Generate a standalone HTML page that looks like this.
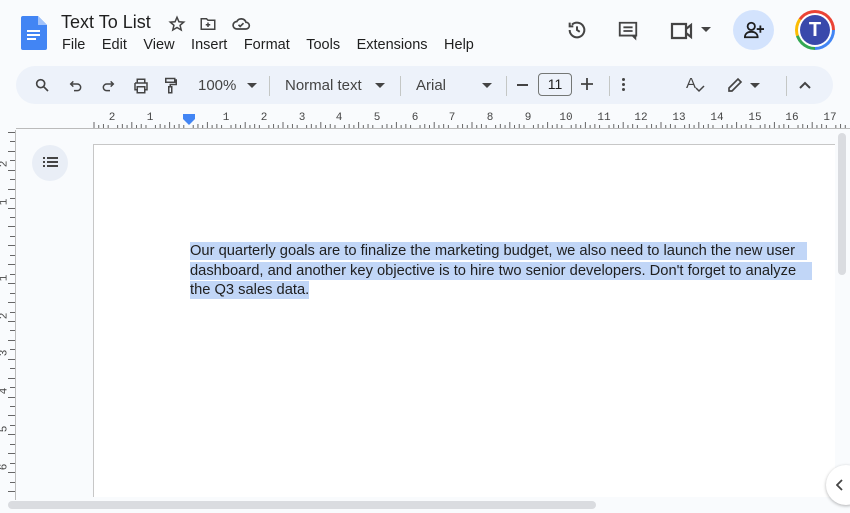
<!DOCTYPE html>
<html><head><meta charset="utf-8"><style>
*{margin:0;padding:0;box-sizing:border-box}
body{width:850px;height:513px;overflow:hidden;background:#f9fbfd;font-family:"Liberation Sans",Arial,sans-serif;position:relative;color:#1f1f1f}
.abs{position:absolute}
.menu span{margin-right:16.5px}
.tb{position:absolute;left:16px;top:66px;width:817px;height:38px;background:#edf2fa;border-radius:19px}
.sep{position:absolute;top:10px;width:1px;height:20px;background:#c4c7c5}
svg{position:absolute}
.rn{position:absolute;top:112px;font-size:11px;color:#444;font-family:"Liberation Mono",monospace}
</style></head><body>
<svg style="left:21px;top:16px" width="26" height="34" viewBox="0 0 26 34"><path d="M2 0h15l9 9v23a2 2 0 0 1-2 2H2a2 2 0 0 1-2-2V2a2 2 0 0 1 2-2z" fill="#4285f4"/><path d="M17 0v9h9z" fill="#a1c2fa"/><rect x="6" y="14" width="13" height="2" fill="#fff"/><rect x="6" y="18" width="13" height="2" fill="#fff"/><rect x="6" y="22" width="9" height="2" fill="#fff"/></svg>
<div class="abs" style="left:61px;top:12px;font-size:18px;color:#1f1f1f">Text To List</div>
<svg style="left:168px;top:15px" width="18" height="18" viewBox="0 0 24 24"><path d="M12 3l2.6 6 6.4.5-4.9 4.2 1.5 6.3L12 16.7 6.4 20l1.5-6.3L3 9.5l6.4-.5z" fill="none" stroke="#444" stroke-width="2"/></svg>
<svg style="left:199px;top:15px" width="18" height="18" viewBox="0 0 24 24"><path d="M3 5h7l2 2h9v12H3z M9 13h6 M12 10v6" fill="none" stroke="#444" stroke-width="2"/></svg>
<svg style="left:230px;top:14px" width="22" height="20" viewBox="0 0 24 24"><path d="M7 18h11a4 4 0 0 0 0-8 6 6 0 0 0-11-1 4.5 4.5 0 0 0 0 9z M9 13l2 2 4-4" fill="none" stroke="#444" stroke-width="2"/></svg>
<div class="abs menu" style="left:62px;top:37px;font-size:14.5px;color:#1f1f1f"><span>File</span><span>Edit</span><span>View</span><span>Insert</span><span>Format</span><span>Tools</span><span>Extensions</span><span>Help</span></div>
<svg style="left:566px;top:19px" width="22" height="22" viewBox="0 0 24 24"><path d="M4 12a8 8 0 1 0 2.5-5.8M4 4v4h4M12 8v4l3 2" fill="none" stroke="#444" stroke-width="2.2"/></svg>
<svg style="left:617px;top:20px" width="22" height="22" viewBox="0 0 24 24"><path d="M3 3h18v14H7l-0 0H3z M7 8h10 M7 12h10 M17 17l3 3V17" fill="none" stroke="#444" stroke-width="2"/></svg>
<svg style="left:670px;top:21px" width="26" height="20" viewBox="0 0 26 20"><path d="M2 3h14v14H2z M16 8l5-4v12l-5-4" fill="none" stroke="#444" stroke-width="2.2"/></svg>
<svg style="left:701px;top:27px" width="10" height="6"><path d="M0 0h10L5 5z" fill="#444"/></svg>
<div class="abs" style="left:733px;top:10px;width:41px;height:40px;border-radius:50%;background:#d3e3fd"></div>
<svg style="left:743px;top:20px" width="22" height="20" viewBox="0 0 24 22"><circle cx="9" cy="7" r="4" fill="none" stroke="#1f1f1f" stroke-width="2"/><path d="M2 19c0-4 3-6 7-6s7 2 7 6z M19 6v8 M15 10h8" fill="none" stroke="#1f1f1f" stroke-width="2"/></svg>
<div class="abs" style="left:795px;top:10px;width:40px;height:40px;border-radius:50%;background:conic-gradient(#ea4335 0 25%,#4285f4 25% 50%,#34a853 50% 70%,#fbbc04 70% 85%,#ea4335 85%)"></div>
<div class="abs" style="left:798px;top:13px;width:34px;height:34px;border-radius:50%;background:#fff"></div>
<div class="abs" style="left:800px;top:15px;width:30px;height:30px;border-radius:50%;background:#3949ab;color:#fff;font-weight:bold;font-size:20px;text-align:center;line-height:30px">T</div>
<div class="tb">
<svg style="left:18px;top:11px" width="16" height="16" viewBox="0 0 24 24"><circle cx="10" cy="10" r="6" fill="none" stroke="#444" stroke-width="2.5"/><path d="M14.5 14.5L21 21" stroke="#444" stroke-width="2.5"/></svg>
<svg style="left:52px;top:12px" width="16" height="16" viewBox="0 0 24 24"><path d="M8 5L4 9l4 4M4 9h10a5 5 0 0 1 0 10H9" fill="none" stroke="#444" stroke-width="2.2"/></svg>
<svg style="left:84px;top:12px" width="16" height="16" viewBox="0 0 24 24"><path d="M16 5l4 4-4 4M20 9H10a5 5 0 0 0 0 10h5" fill="none" stroke="#444" stroke-width="2.2"/></svg>
<svg style="left:116px;top:11px" width="18" height="18" viewBox="0 0 24 24"><path d="M7 8V3h10v5 M4 8h16v9h-3 M7 17H4V8 M7 13h10v8H7z" fill="none" stroke="#444" stroke-width="2"/></svg>
<svg style="left:147px;top:11px" width="16" height="18" viewBox="0 0 20 24"><path d="M3 2h12v5H3z M15 4h2v6H9v3 M7 13h4v8H7z" fill="none" stroke="#444" stroke-width="2"/></svg>
<div class="abs" style="left:182px;top:11px;font-size:15px;color:#444">100%</div>
<svg style="left:231px;top:17px" width="10" height="6"><path d="M0 0h10L5 5z" fill="#444"/></svg>
<div class="sep" style="left:253px"></div>
<div class="abs" style="left:269px;top:11px;font-size:15px;color:#444">Normal text</div>
<svg style="left:359px;top:17px" width="10" height="6"><path d="M0 0h10L5 5z" fill="#444"/></svg>
<div class="sep" style="left:384px"></div>
<div class="abs" style="left:400px;top:11px;font-size:15px;color:#444">Arial</div>
<svg style="left:466px;top:17px" width="10" height="6"><path d="M0 0h10L5 5z" fill="#444"/></svg>
<div class="sep" style="left:490px"></div>
<div class="abs" style="left:501px;top:18px;width:11px;height:1.5px;background:#444"></div>
<div class="abs" style="left:522px;top:7px;width:34px;height:23px;border:1px solid #747775;border-radius:4px;font-size:14px;text-align:center;line-height:21px;color:#1f1f1f">11</div>
<svg style="left:565px;top:12px" width="12" height="12"><path d="M6 0v12M0 6h12" stroke="#444" stroke-width="1.8"/></svg>
<div class="sep" style="left:593px"></div>
<div class="abs" style="left:606px;top:12px;width:3px;height:3px;border-radius:50%;background:#444;box-shadow:0 5px 0 #444,0 10px 0 #444"></div>
<div class="abs" style="left:670px;top:9px;font-size:15px;color:#444">A</div>
<svg style="left:679px;top:19px" width="10" height="8"><path d="M1 3l3 3 5-5" fill="none" stroke="#444" stroke-width="1.5"/></svg>
<svg style="left:710px;top:10px" width="18" height="18" viewBox="0 0 24 24"><path d="M4 20v-4L16 4l4 4L8 20z" fill="none" stroke="#444" stroke-width="2.2"/></svg>
<svg style="left:734px;top:17px" width="10" height="6"><path d="M0 0h10L5 5z" fill="#444"/></svg>
<div class="sep" style="left:770px"></div>
<svg style="left:782px;top:14px" width="14" height="10"><path d="M2 8l5-5 5 5" fill="none" stroke="#444" stroke-width="2"/></svg>
</div>
<svg style="left:0;top:108px" width="850" height="22">
<path d="M16 20.5H850" stroke="#bbb"/>
<g id="tk"></g>
<path d="M183 6h12v5l-6 6-6-6z" fill="#4285f4"/>
</svg>
<div id="rt"></div>
<div class="abs" style="left:15px;top:130px;width:1px;height:370px;background:#bbb"></div>
<div id="lr"></div>
<div class="abs" style="left:32px;top:145px;width:36px;height:36px;border-radius:50%;background:#e9eef6"></div>
<svg style="left:43px;top:157px" width="15" height="12"><path d="M0 1h2M0 5h2M0 9h2M4 1h11M4 5h11M4 9h11" stroke="#444" stroke-width="2"/></svg>
<div class="abs" style="left:93px;top:144px;width:742px;height:353px;background:#fff;border-left:1px solid #c7c7c7;border-top:1px solid #c7c7c7"></div>
<div class="abs" style="left:190px;top:242px;width:630px;font-size:14.7px;line-height:19.5px;color:#1f1f1f;font-family:'Liberation Sans',Arial,sans-serif"><span style="background:#c1d6f7;padding:1px 12px 1px 0">Our quarterly goals are to finalize the marketing budget, we also need to launch the new user</span><br><span style="background:#c1d6f7;padding:1px 16px 1px 0">dashboard, and another key objective is to hire two senior developers. Don't forget to analyze</span><br><span style="background:#c1d6f7;padding:1px 0">the Q3 sales data.</span></div>
<div class="abs" style="left:838px;top:133px;width:8px;height:142px;border-radius:4px;background:#dadce0"></div>
<div class="abs" style="left:8px;top:501px;width:588px;height:8px;border-radius:4px;background:#dadce0"></div>
<div class="abs" style="left:826px;top:465px;width:40px;height:40px;border-radius:50%;background:#fff;box-shadow:0 1px 3px rgba(0,0,0,.3)"></div>
<svg style="left:836px;top:479px" width="8" height="12"><path d="M6 1L1 6l5 5" fill="none" stroke="#444" stroke-width="1.8"/></svg>
<script>
var s='';
var g=document.getElementById('tk');var ns='http://www.w3.org/2000/svg';
var unit=37.8,origin=190;
for(var x=94;x<=850;x+=unit/8){var i=Math.round((x-origin)/(unit/8));var h=(i%8==0)?0:(i%4==0?6:(i%2==0?4:3));if(i%8==0)continue;var l=document.createElementNS(ns,'line');l.setAttribute('x1',x);l.setAttribute('x2',x);l.setAttribute('y1',20-h);l.setAttribute('y2',20);l.setAttribute('stroke','#666');g.appendChild(l);}
var labels=[[112,'2'],[150,'1'],[226,'1'],[264,'2'],[302,'3'],[339,'4'],[377,'5'],[415,'6'],[452,'7'],[490,'8'],[528,'9'],[566,'10'],[604,'11'],[641,'12'],[679,'13'],[717,'14'],[755,'15'],[792,'16'],[830,'17']];
labels.forEach(function(a){s+='<div class="rn" style="left:'+(a[0]-(a[1].length*3.3))+'px">'+a[1]+'</div>'});
document.getElementById('rt').innerHTML=s;
var t='';
for(var y=132;y<500;y+=9.45){t+='<div class="abs" style="left:'+(Math.round((y-132)/9.45)%2?10:8)+'px;top:'+Math.round(y)+'px;width:'+(Math.round((y-132)/9.45)%2?5:7)+'px;height:1px;background:#666"></div>'}
var ll=[[164,'2'],[202,'1'],[278,'1'],[316,'2'],[353,'3'],[391,'4'],[429,'5'],[467,'6']];
ll.forEach(function(a){t+='<div class="abs" style="left:1px;top:'+(a[0]-6)+'px;font-size:11px;color:#444;transform:rotate(-90deg);font-family:Liberation Mono,monospace">'+a[1]+'</div>'});
document.getElementById('lr').innerHTML=t;
</script>
</body></html>
